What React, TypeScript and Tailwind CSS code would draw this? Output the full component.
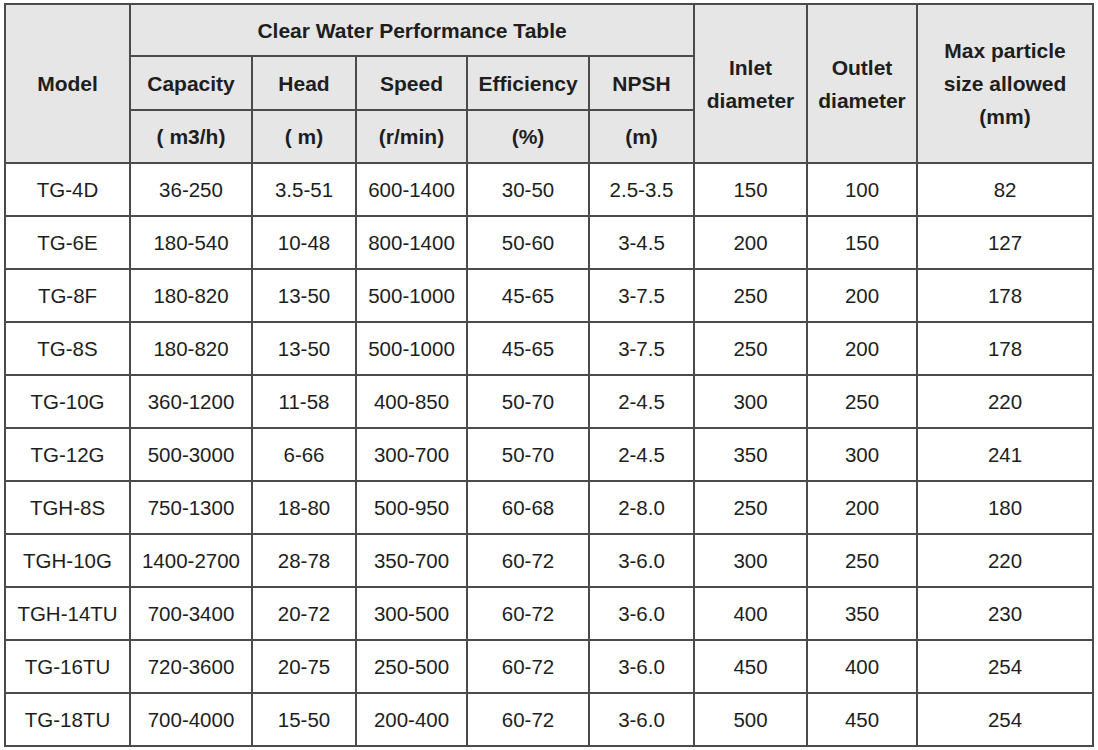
const widths = [125, 122, 104, 111, 122, 105, 113, 110, 176];

const rows: string[][] = [
  ["TG-4D", "36-250", "3.5-51", "600-1400", "30-50", "2.5-3.5", "150", "100", "82"],
  ["TG-6E", "180-540", "10-48", "800-1400", "50-60", "3-4.5", "200", "150", "127"],
  ["TG-8F", "180-820", "13-50", "500-1000", "45-65", "3-7.5", "250", "200", "178"],
  ["TG-8S", "180-820", "13-50", "500-1000", "45-65", "3-7.5", "250", "200", "178"],
  ["TG-10G", "360-1200", "11-58", "400-850", "50-70", "2-4.5", "300", "250", "220"],
  ["TG-12G", "500-3000", "6-66", "300-700", "50-70", "2-4.5", "350", "300", "241"],
  ["TGH-8S", "750-1300", "18-80", "500-950", "60-68", "2-8.0", "250", "200", "180"],
  ["TGH-10G", "1400-2700", "28-78", "350-700", "60-72", "3-6.0", "300", "250", "220"],
  ["TGH-14TU", "700-3400", "20-72", "300-500", "60-72", "3-6.0", "400", "350", "230"],
  ["TG-16TU", "720-3600", "20-75", "250-500", "60-72", "3-6.0", "450", "400", "254"],
  ["TG-18TU", "700-4000", "15-50", "200-400", "60-72", "3-6.0", "500", "450", "254"],
];

const th = "border-2 border-[#4b4b4b] bg-[#e6e6e6] font-bold text-[21px] text-center align-middle p-0";
const td = "border-2 border-[#4b4b4b] bg-white text-center align-middle p-0 h-[53px]";

export default function App() {
  return (
    <div className="w-[1098px] h-[750px] bg-white pl-[4px] pt-[3px] overflow-hidden">
      <table
        className="table-fixed border-collapse text-[20.5px] leading-[33px] text-[#1e1e1e]"
        style={{ fontFamily: '"Liberation Sans", Arial, sans-serif', width: 1090 }}
      >
        <colgroup>
          {widths.map((w, i) => (
            <col key={i} style={{ width: w }} />
          ))}
        </colgroup>
        <thead>
          <tr className="h-[52px]">
            <th rowSpan={3} className={th}>Model</th>
            <th colSpan={5} className={th}>Clear Water Performance Table</th>
            <th rowSpan={3} className={th}>
              Inlet
              <br />
              diameter
            </th>
            <th rowSpan={3} className={th}>
              Outlet
              <br />
              diameter
            </th>
            <th rowSpan={3} className={th}>
              Max particle
              <br />
              size allowed
              <br />
              (mm)
            </th>
          </tr>
          <tr className="h-[54px]">
            <th className={th}>Capacity</th>
            <th className={th}>Head</th>
            <th className={th}>Speed</th>
            <th className={th}>Efficiency</th>
            <th className={th}>NPSH</th>
          </tr>
          <tr className="h-[53px]">
            <th className={th}>( m3/h)</th>
            <th className={th}>( m)</th>
            <th className={th}>(r/min)</th>
            <th className={th}>(%)</th>
            <th className={th}>(m)</th>
          </tr>
        </thead>
        <tbody>
          {rows.map((r) => (
            <tr key={r[0]}>
              {r.map((c, i) => (
                <td key={i} className={td}>
                  {c}
                </td>
              ))}
            </tr>
          ))}
        </tbody>
      </table>
    </div>
  );
}
